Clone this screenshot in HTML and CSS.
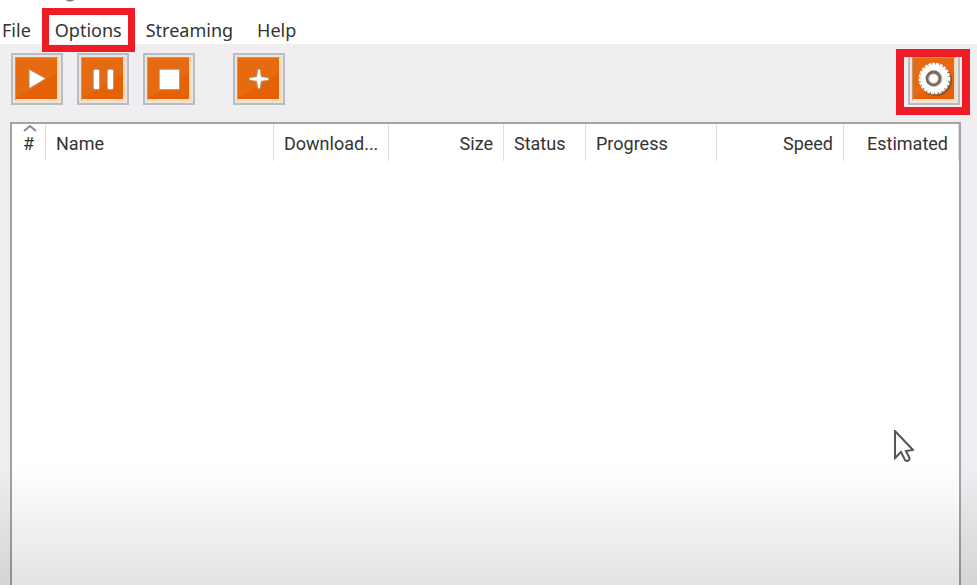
FILE: index.html
```html
<!DOCTYPE html>
<html lang="en">
<head>
  <meta charset="UTF-8" />
  <meta name="viewport" content="width=device-width, initial-scale=1" />
  <title>Downloads</title>
  <link rel="stylesheet" href="styles.css">
</head>

<body>
  <header class="menubar">
    <svg class="title-tail" viewBox="0 0 10 3" aria-hidden="true"><path d="M1 -1Q5 2 9 -1" /></svg>
    <nav class="menu">
      <button type="button">File</button>
      <button type="button" class="marked">Options</button>
      <button type="button">Streaming</button>
      <button type="button">Help</button>
    </nav>
  </header>

  <main class="window">
    <div class="toolbar">
      <button type="button" class="tool" aria-label="Start">
        <svg viewBox="0 0 44 44"><path class="shine" d="M44 0V16L16 34L0 42V0Z" /><path class="glyph" d="M14 12L32 22L14 33Z" /></svg>
      </button>
      <button type="button" class="tool" aria-label="Pause">
        <svg viewBox="0 0 44 44"><path class="shine" d="M44 0V16L16 34L0 42V0Z" /><rect class="glyph" x="12" y="12" width="7" height="22" rx="2" /><rect class="glyph" x="27" y="12" width="7" height="22" rx="2" /></svg>
      </button>
      <button type="button" class="tool" aria-label="Stop">
        <svg viewBox="0 0 44 44"><path class="shine" d="M44 0V16L16 34L0 42V0Z" /><rect class="glyph" x="12" y="12" width="22" height="22" /></svg>
      </button>
      <button type="button" class="tool add" aria-label="Add">
        <svg viewBox="0 0 44 44"><path class="shine" d="M44 0V16L16 34L0 42V0Z" /><path class="glyph" d="M21 12H24L25 20L33 21V24L25 25L24 33H21L20 25L12 24V21L20 20Z" /></svg>
      </button>
      <button type="button" class="tool settings" aria-label="Settings">
        <svg viewBox="0 0 44 44">
          <path class="shine" d="M44 0V16L16 34L0 42V0Z" />
          <circle class="gear-shadow" cx="25" cy="24" r="15" />
          <circle class="gear-teeth" cx="23" cy="22" r="15" />
          <circle class="gear-ring" cx="23" cy="22" r="12" />
          <circle class="gear-groove" cx="22" cy="22" r="7" />
          <circle class="gear-hub" cx="22" cy="22" r="4" />
        </svg>
      </button>
    </div>

    <div class="list">
      <table>
        <thead>
          <tr>
            <th class="col-num"><svg class="sort" viewBox="0 0 14 7" aria-hidden="true"><path d="M1 6L7 1L13 6" /></svg>#</th>
            <th class="col-name">Name</th>
            <th class="col-size">Download...</th>
            <th class="col-size right">Size</th>
            <th class="col-status">Status</th>
            <th class="col-progress">Progress</th>
            <th class="col-speed right">Speed</th>
            <th class="col-size right">Estimated</th>
          </tr>
        </thead>
      </table>
    </div>
  </main>

  <div class="shade"></div>
  <svg class="cursor" viewBox="0 0 20 32" aria-hidden="true"><path d="M1 1V28L7 22L11 30Q13 32 15 30Q16 29 15 27L12 21L19 20Z" /></svg>
</body>
</html>
```

FILE: styles.css
```css
* {
  box-sizing: border-box;
}
body {
  display: flex;
  flex-direction: column;
  min-height: 100vh;
  margin: 0;
  background: #f0eef1;
  color: #333;
  font-family: "Liberation Sans", Arial, sans-serif;
}
button {
  margin: 0;
  padding: 0;
  border: 0;
  background: none;
  color: inherit;
  font: inherit;
}

/* Menu */
.menubar {
  position: relative;
  height: 44px;
  padding: 16px 0 0 2px;
  background: #fff;
}
.title-tail {
  position: absolute;
  top: 0;
  left: 65px;
  width: 10px;
  height: 3px;
  fill: none;
  stroke: #778;
  stroke-width: 2;
}
.menu {
  display: flex;
  gap: 24px;
  font-family: "Noto Sans", "Open Sans", sans-serif;
  font-size: 18px;
  line-height: 28px;
}
.marked {
  outline: 7px solid #ee1c25;
  outline-offset: 6px;
  z-index: 1;
}
.menu .marked {
  line-height: 18px;
  height: 18px;
  margin-top: 5px;
}

/* Toolbar */
.window {
  display: flex;
  flex: 1;
  flex-direction: column;
  padding: 9px 16px 0 10px;
}
.toolbar {
  display: flex;
  gap: 14px;
  padding: 0 1px 17px 1px;
}
.tool {
  position: relative;
  width: 52px;
  height: 52px;
  padding: 2px;
  border: 2px solid #b9bcc0;
  background: #ebe5e2;
}
.tool svg {
  display: block;
  width: 44px;
  height: 44px;
  border: 1px solid #c89468;
  border-right: 2px solid #fbd9b8;
  border-bottom: 2px solid #fbd9b8;
  background: #e46205;
}
.shine {
  fill: #e66a10;
}
.glyph {
  fill: #fff;
  stroke: #b98760;
  stroke-width: 1;
}
.add {
  margin-left: 24px;
}
.settings {
  margin-left: auto;
}
.settings::after {
  content: "";
  position: absolute;
  inset: -6px -12px -12px -14px;
  border: 8px solid #ee1c25;
}
.gear-shadow {
  fill: none;
  stroke: #8a5a38;
  stroke-width: 4;
}
.gear-teeth {
  fill: #d9d5d2;
  stroke: #f8f8f8;
  stroke-width: 4;
  stroke-dasharray: 3 1;
}
.gear-ring {
  fill: none;
  stroke: #fff;
  stroke-width: 6;
}
.gear-groove {
  fill: #ddd;
  stroke: #78695f;
  stroke-width: 3;
}
.gear-hub {
  fill: #fff;
}

/* Download list */
.list {
  flex: 1;
  border: 2px solid #a2a3a6;
  border-bottom: 0;
  background: #fff;
}
table {
  width: 100%;
  border-collapse: separate;
  border-spacing: 0;
  table-layout: fixed;
}
th {
  position: relative;
  height: 37px;
  padding: 3px 10px 0;
  border-right: 1px solid #dedee0;
  font-family: Roboto, sans-serif;
  font-size: 18px;
  font-weight: 400;
  line-height: 24px;
  text-align: left;
  white-space: nowrap;
}
th.right {
  text-align: right;
}
.col-num { width: 34px; }
th.col-num {
  padding: 3px 0 0;
  text-align: center;
}
.col-size { width: 115px; }
.col-status { width: 82px; }
.col-progress { width: 131px; }
.col-speed { width: 127px; }
.sort {
  position: absolute;
  top: 1px;
  left: 11px;
  width: 14px;
  height: 7px;
  fill: none;
  stroke: #8a8a8a;
  stroke-width: 2;
}

/* Bottom fade and pointer */
.shade {
  position: fixed;
  right: 0;
  bottom: 0;
  left: 0;
  height: 120px;
  background: linear-gradient(rgba(0, 0, 0, 0), rgba(0, 0, 0, 0.11));
  pointer-events: none;
}
.cursor {
  position: fixed;
  right: 63px;
  bottom: 123px;
  width: 20px;
  height: 32px;
  fill: #fff;
  stroke: #555;
  stroke-width: 2;
  pointer-events: none;
}
```
